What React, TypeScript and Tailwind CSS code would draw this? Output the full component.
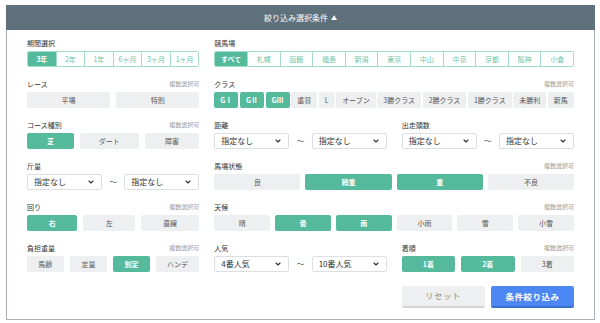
import { ChevronDown } from "lucide-react"

const Label = ({ title, multi }: { title: string; multi?: boolean }) => (
  <div className="flex items-center justify-between h-[10px] mb-[3px]">
    <span className="text-[7px] leading-none text-[#333]">{title}</span>
    {multi && <span className="text-[6px] leading-none text-[#9a9a9a]">複数選択可</span>}
  </div>
)

const Tabs = ({ items, active }: { items: string[]; active: string }) => (
  <div className="flex h-[16px] border border-[#a3ddca] rounded-[2px] overflow-hidden">
    {items.map((t, i) => (
      <div
        key={t}
        className={`flex-1 flex items-center justify-center text-[7px] ${i > 0 ? "border-l border-[#a3ddca]" : ""} ${t === active ? "bg-[#55b99c] text-white font-bold" : "bg-white text-[#6cc4a8]"}`}
      >
        {t}
      </div>
    ))}
  </div>
)

const Btn = ({ label, on, className = "" }: { label: string; on?: boolean; className?: string }) => (
  <div
    className={`h-[16px] rounded-[2px] flex items-center justify-center text-[7px] leading-none ${on ? "bg-[#55b99c] text-white font-bold" : "bg-[#eeeff1] text-[#555]"} ${className}`}
  >
    {label}
  </div>
)

const Select = ({ value }: { value: string }) => (
  <div className="w-[75px] h-[16px] border border-[#dcdfe2] rounded-[2px] bg-white flex items-center justify-between pl-[6px] pr-[6px]">
    <span className="text-[8px] leading-none text-[#333]">{value}</span>
    <ChevronDown size={8} strokeWidth={3.5} className="text-[#333]" />
  </div>
)

const Range = ({ from, to }: { from: string; to: string }) => (
  <div className="flex items-center justify-between">
    <Select value={from} />
    <span className="text-[8px] leading-none text-[#666]">〜</span>
    <Select value={to} />
  </div>
)

const classes = [
  { label: "GⅠ", on: true },
  { label: "GⅡ", on: true },
  { label: "GⅢ", on: true },
  { label: "重賞" },
  { label: "L" },
  { label: "オープン" },
  { label: "3勝クラス" },
  { label: "2勝クラス" },
  { label: "1勝クラス" },
  { label: "未勝利" },
  { label: "新馬" },
]

const App = () => {
  return (
    <div className="w-[600px] h-[323px] bg-white pt-[5px] font-['Noto_Sans_CJK_JP','Noto_Sans',sans-serif]">
      <div className="ml-[6px] w-[589px]">
        <div className="h-[25px] bg-[#5e707c] flex items-center justify-center gap-[3px] text-white">
          <span className="text-[8px] leading-none">絞り込み選択条件</span>
          <span className="text-[6px] leading-none">▲</span>
        </div>
        <div className="border-x border-b border-[#a9b0b4] px-[20px] pt-[8px] pb-[11px]">
          <div className="grid grid-cols-3 gap-x-[15px] gap-y-[12px]">
            <div>
              <Label title="期間選択" />
              <Tabs items={["3年", "2年", "1年", "6ヶ月", "3ヶ月", "1ヶ月"]} active="3年" />
            </div>
            <div className="col-span-2">
              <Label title="競馬場" />
              <Tabs
                items={["すべて", "札幌", "函館", "福島", "新潟", "東京", "中山", "中京", "京都", "阪神", "小倉"]}
                active="すべて"
              />
            </div>

            <div>
              <Label title="レース" multi />
              <div className="grid grid-cols-2 gap-[6px]">
                <Btn label="平場" />
                <Btn label="特別" />
              </div>
            </div>
            <div className="col-span-2">
              <Label title="クラス" multi />
              <div className="flex justify-between">
                {classes.map((c) => (
                  <Btn key={c.label} label={c.label} on={c.on} className="px-[6px]" />
                ))}
              </div>
            </div>

            <div>
              <Label title="コース種別" multi />
              <div className="grid grid-cols-[47fr_59fr_55fr] gap-[6px]">
                <Btn label="芝" on />
                <Btn label="ダート" />
                <Btn label="障害" />
              </div>
            </div>
            <div>
              <Label title="距離" />
              <Range from="指定なし" to="指定なし" />
            </div>
            <div>
              <Label title="出走頭数" />
              <Range from="指定なし" to="指定なし" />
            </div>

            <div>
              <Label title="斤量" />
              <Range from="指定なし" to="指定なし" />
            </div>
            <div className="col-span-2">
              <Label title="馬場状態" multi />
              <div className="grid grid-cols-4 gap-[5px]">
                <Btn label="良" />
                <Btn label="稍重" on />
                <Btn label="重" on />
                <Btn label="不良" />
              </div>
            </div>

            <div>
              <Label title="回り" multi />
              <div className="grid grid-cols-[51fr_52fr_59fr] gap-[6px]">
                <Btn label="右" on />
                <Btn label="左" />
                <Btn label="直線" />
              </div>
            </div>
            <div className="col-span-2">
              <Label title="天候" multi />
              <div className="grid grid-cols-6 gap-[5px]">
                <Btn label="晴" />
                <Btn label="曇" on />
                <Btn label="雨" on />
                <Btn label="小雨" />
                <Btn label="雪" />
                <Btn label="小雪" />
              </div>
            </div>

            <div>
              <Label title="負担重量" multi />
              <div className="grid grid-cols-[37fr_38fr_37fr_44fr] gap-[6px]">
                <Btn label="馬齢" />
                <Btn label="定量" />
                <Btn label="別定" on />
                <Btn label="ハンデ" />
              </div>
            </div>
            <div>
              <Label title="人気" />
              <Range from="4番人気" to="10番人気" />
            </div>
            <div>
              <Label title="着順" multi />
              <div className="grid grid-cols-3 gap-[6px]">
                <Btn label="1着" on />
                <Btn label="2着" on />
                <Btn label="3着" />
              </div>
            </div>

            <div className="col-start-3 mt-[2px] grid grid-cols-2 gap-[6px]">
              <button className="h-[22px] rounded-[2px] bg-[#eeeff1] border-b-2 border-[#d3d6d9] text-[8px] tracking-[1px] text-[#888]">
                リセット
              </button>
              <button className="h-[22px] rounded-[2px] bg-[#4c87f3] border-b-2 border-[#3a6ccc] text-[8.5px] font-bold tracking-[0.5px] text-white">
                条件絞り込み
              </button>
            </div>
          </div>
        </div>
      </div>
    </div>
  )
}

export default App
